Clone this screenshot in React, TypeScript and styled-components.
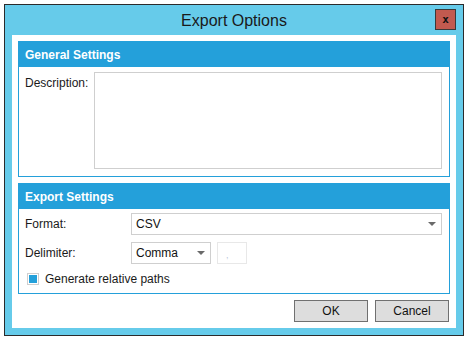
import styled, { createGlobalStyle } from 'styled-components';

const GlobalStyle = createGlobalStyle`
  body {
    margin: 0;
    background: #ffffff;
    font-family: 'Liberation Sans', Arial, sans-serif;
  }
`;

const Window = styled.div`
  margin: 4px 0 0 4px;
  width: 458px;
  border: 1px solid #2b2b2b;
  background-color: #66cbea;
  display: flex;
  flex-direction: column;
`;

const TitleBar = styled.div`
  height: 30px;
  display: grid;
  grid-template-columns: 1fr auto 1fr;
  align-items: center;
`;

const Title = styled.div`
  grid-column: 2;
  font-size: 16px;
  color: #1a1a1a;
  padding-top: 1px;
`;

const CloseButton = styled.div`
  grid-column: 3;
  justify-self: end;
  margin-right: 7px;
  margin-top: -1px;
  width: 19px;
  height: 19px;
  border: 1px solid #3a3a3a;
  background-color: #c25a4f;
  display: flex;
  align-items: center;
  justify-content: center;
  font-family: 'DejaVu Sans Mono', monospace;
  font-weight: bold;
  font-size: 11px;
  color: #111111;
  line-height: 1;
`;

const Panel = styled.div`
  margin: 0 7px 7px;
  background-color: #ffffff;
  padding: 6px;
  display: flex;
  flex-direction: column;
  gap: 6px;
`;

const Group = styled.div<{ $height: number }>`
  height: ${(p) => p.$height}px;
  box-sizing: border-box;
  border: 1px solid #24a0da;
  display: flex;
  flex-direction: column;
`;

const GroupHeader = styled.div`
  height: 25px;
  background-color: #24a0da;
  color: #ffffff;
  font-weight: bold;
  font-size: 12px;
  display: flex;
  align-items: center;
  padding-left: 6px;
`;

const GroupBody = styled.div`
  flex: 1;
  padding: 4px 7px 6px 6px;
  display: flex;
  flex-direction: column;
  gap: 7px;
`;

const Row = styled.div`
  display: flex;
  align-items: center;
`;

const TopRow = styled.div`
  display: flex;
  align-items: flex-start;
  padding-top: 1px;
`;

const Label = styled.div<{ $width: number }>`
  width: ${(p) => p.$width}px;
  font-size: 12px;
  color: #1a1a1a;
`;

const DescLabel = styled(Label)`
  padding-top: 4px;
`;

const TextArea = styled.div`
  flex: 1;
  height: 97px;
  box-sizing: border-box;
  border: 1px solid #cfcfcf;
`;

const Select = styled.div<{ $width?: number }>`
  ${(p) => (p.$width ? `width: ${p.$width}px;` : 'flex: 1;')}
  height: 22px;
  box-sizing: border-box;
  border: 1px solid #cfcfcf;
  display: flex;
  align-items: center;
  justify-content: space-between;
  padding: 0 5px 0 4px;
  font-size: 12px;
  color: #111111;
`;

const Arrow = styled.span`
  width: 0;
  height: 0;
  border-left: 4px solid transparent;
  border-right: 4px solid transparent;
  border-top: 4px solid #6a6a6a;
`;

const SmallBox = styled.div`
  width: 30px;
  height: 22px;
  box-sizing: border-box;
  margin-left: 6px;
  border: 1px solid #e8e8e8;
  color: #b8c4d8;
  font-size: 9px;
  display: flex;
  align-items: center;
  justify-content: flex-start;
  padding: 4px 0 0 8px;
`;

const CheckRow = styled.div`
  display: flex;
  align-items: center;
  gap: 6px;
  padding-left: 2px;
  margin-top: 1px;
  font-size: 12px;
  color: #1a1a1a;
`;

const CheckBox = styled.div`
  width: 12px;
  height: 12px;
  box-sizing: border-box;
  border: 1px solid #cfcfcf;
  padding: 1px;
  &::after {
    content: '';
    display: block;
    width: 8px;
    height: 8px;
    background-color: #24a0da;
  }
`;

const ButtonRow = styled.div`
  display: flex;
  justify-content: flex-end;
  gap: 7px;
  padding-right: 1px;
`;

const Button = styled.div`
  width: 74px;
  height: 22px;
  box-sizing: border-box;
  border: 1px solid #707070;
  background-color: #dddddd;
  display: flex;
  align-items: center;
  justify-content: center;
  font-size: 12px;
  color: #111111;
`;

const App = () => {
  return (
    <>
      <GlobalStyle />
      <Window>
        <TitleBar>
          <Title>Export Options</Title>
          <CloseButton>x</CloseButton>
        </TitleBar>
        <Panel>
          <Group $height={136}>
            <GroupHeader>General Settings</GroupHeader>
            <GroupBody>
              <TopRow>
                <DescLabel $width={69}>Description:</DescLabel>
                <TextArea />
              </TopRow>
            </GroupBody>
          </Group>
          <Group $height={111}>
            <GroupHeader>Export Settings</GroupHeader>
            <GroupBody>
              <Row>
                <Label $width={106}>Format:</Label>
                <Select>
                  CSV
                  <Arrow />
                </Select>
              </Row>
              <Row>
                <Label $width={106}>Delimiter:</Label>
                <Select $width={80}>
                  Comma
                  <Arrow />
                </Select>
                <SmallBox>,</SmallBox>
              </Row>
              <CheckRow>
                <CheckBox />
                Generate relative paths
              </CheckRow>
            </GroupBody>
          </Group>
          <ButtonRow>
            <Button>OK</Button>
            <Button>Cancel</Button>
          </ButtonRow>
        </Panel>
      </Window>
    </>
  );
};

export default App;
